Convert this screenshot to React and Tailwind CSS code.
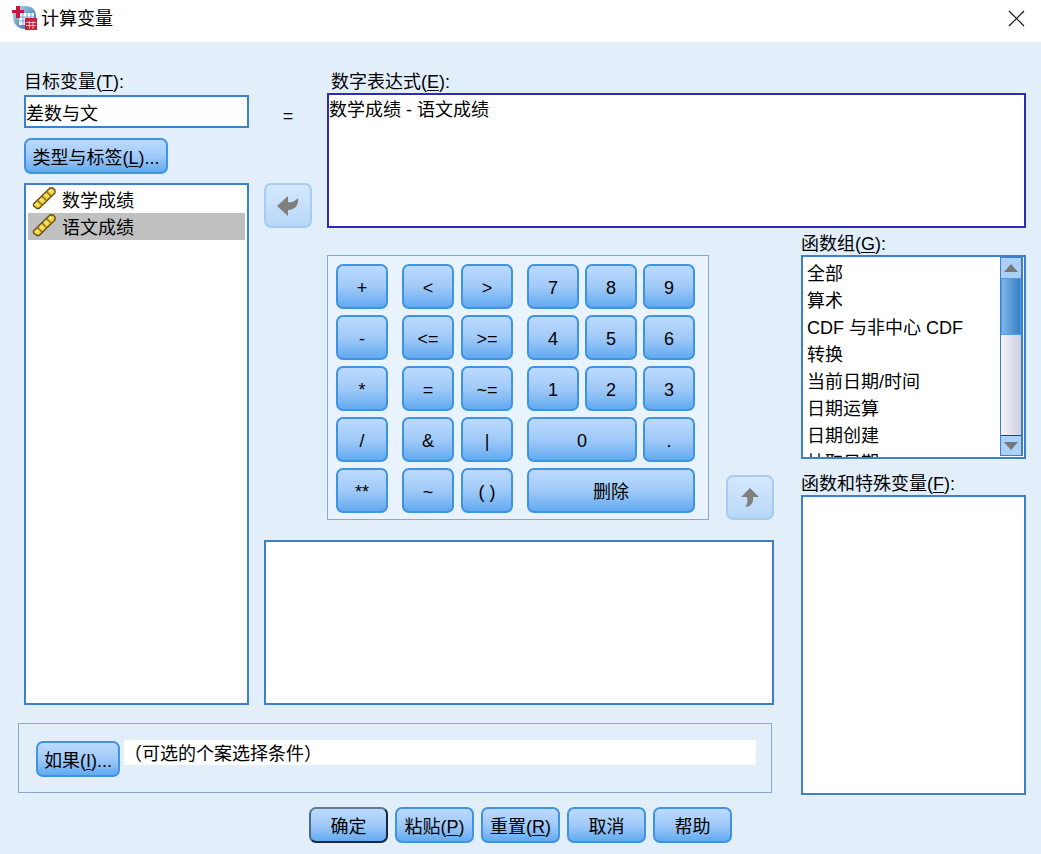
import { useState } from 'react';

const variables = ['数学成绩', '语文成绩'];

const functionGroups = [
  '全部',
  '算术',
  'CDF 与非中心 CDF',
  '转换',
  '当前日期/时间',
  '日期运算',
  '日期创建',
  '抽取日期',
];

const arithmeticKeys = ['+', '-', '*', '/', '**'];
const compareKeys = ['<', '>', '<=', '>=', '=', '~=', '&', '|', '~', '( )'];
const numberKeys = ['7', '8', '9', '4', '5', '6', '1', '2', '3'];

const buttonStyle =
  'rounded-[7px] border-2 bg-linear-to-b from-[#bcdaff] via-[#a0caf8] to-[#62aaf0] text-black';

function Key({ label, className = '', onPress }) {
  return (
    <button
      type="button"
      onClick={() => onPress(label)}
      className={`h-[45px] min-w-[52px] border-[#3f93e3] pt-0.5 text-lg leading-6 ${buttonStyle} ${className}`}
    >
      {label}
    </button>
  );
}

function DialogButton({ children, isDefault, className = '' }) {
  return (
    <button
      type="button"
      className={`h-9 pt-1 text-lg leading-6 whitespace-nowrap ${buttonStyle} ${
        isDefault ? 'border-t-[#66788f] border-r-[#16283f] border-b-[#16283f] border-l-[#4c6a8e]' : 'border-[#3f93e3]'
      } ${className}`}
    >
      {children}
    </button>
  );
}

// label text with its underlined shortcut letter
function Mnemonic({ text, letter, end = '' }) {
  return (
    <>
      {text}(<span className="underline underline-offset-2">{letter}</span>){end}
    </>
  );
}

function AppIcon() {
  return (
    <svg viewBox="0 0 26 26" className="size-[26px]" aria-hidden="true">
      <defs>
        <linearGradient id="globe" x1="0" y1="0" x2="1" y2="1">
          <stop offset="0" stopColor="#c3dbec" />
          <stop offset="0.5" stopColor="#6d9fcc" />
          <stop offset="1" stopColor="#2d6aa5" />
        </linearGradient>
      </defs>
      <path d="M8 1H14C20 1 24 5 24 11V24H13C5 24 1 18 1 12V8Z" fill="url(#globe)" />
      <rect x="7" y="8" width="15" height="12" fill="#f3f8fc" />
      <path d="M7 12h15M7 16h15M11 8v12M15 8v12M19 8v12" stroke="#7fa8cd" strokeWidth="1" />
      <path d="M4 1h4v4h4v3h-4v5h-4v-5h-4v-3h4z" fill="#c9143c" />
      <rect x="13" y="13" width="12" height="12" fill="#c9203f" />
      <path d="M14 17.500h10M14 20.500h10M17.500 16v8M21 16v8" stroke="#f3b5be" strokeWidth="1" />
    </svg>
  );
}

function RulerIcon() {
  return (
    <svg viewBox="0 0 24 24" className="size-6 shrink-0" aria-hidden="true">
      <path d="M1.500 18L18 2H21L23 4V7L7 22.500H5L1.500 20Z" fill="#f7d13a" stroke="#5c4c1c" strokeWidth="1.300" />
      <path d="M5.500 14.500L10 19M10 10L14.500 14.500M14.500 5.500L19 10" stroke="#7d6418" strokeWidth="1.200" />
      <path d="M4 17.500L6 19.500M8.500 13L10.500 15M13 8.500L15 10.500M17.500 4L19.500 6" stroke="#fdee9c" strokeWidth="1.500" />
    </svg>
  );
}

function MoveButton({ label, children }) {
  return (
    <button
      type="button"
      aria-label={label}
      disabled
      className="flex h-[45px] w-12 items-center justify-center rounded-[7px] border-2 border-[#a5cdf3] bg-linear-to-b from-[#d5e8fd] to-[#b7d7f8]"
    >
      {children}
    </button>
  );
}

function App() {
  const [target, setTarget] = useState('差数与文');
  const [expression, setExpression] = useState('数学成绩 - 语文成绩');
  const [selected, setSelected] = useState('语文成绩');

  const addToExpression = (value) => setExpression(expression + ' ' + value);

  return (
    <div className="flex min-h-screen flex-col bg-[#e2effb] font-['Liberation_Sans','Noto_Sans_CJK_SC',sans-serif] text-lg leading-6 text-black">
      <header className="flex h-[42px] items-center justify-between bg-white pr-4 pb-1.5 pl-3">
        <div className="flex items-center gap-[3px]">
          <AppIcon />
          <h1 className="pt-0.5">计算变量</h1>
        </div>
        <button type="button" aria-label="关闭">
          <svg viewBox="0 0 17 17" className="size-[17px]" fill="none" stroke="#111" strokeWidth="1.200">
            <path d="M1 1l15 15M16 1L1 16" />
          </svg>
        </button>
      </header>

      <main className="grid grid-cols-[231px_1fr_237px] grid-rows-[auto_1fr_auto] gap-x-[15px] pt-7 pr-[15px] pl-[18px]">
        <section className="row-span-2 flex flex-col pl-1.5">
          <label htmlFor="target" className="h-[25px]">
            <Mnemonic text="目标变量" letter="T" end=":" />
          </label>
          <input
            id="target"
            value={target}
            onChange={(e) => setTarget(e.target.value)}
            className="h-[33px] border-2 border-[#3c80cb] bg-white outline-none"
          />
          <DialogButton className="mt-[10px] w-36">
            <Mnemonic text="类型与标签" letter="L" end="..." />
          </DialogButton>
          <ul role="listbox" aria-label="变量" className="mt-[9px] grow border-2 border-[#3c80cb] bg-white px-0.5 py-px">
            {variables.map((name) => (
              <li
                key={name}
                role="option"
                aria-selected={name === selected}
                onClick={() => setSelected(name)}
                className={`flex h-[27px] items-start gap-[6px] pl-1 ${name === selected ? 'bg-[#c0c0c0]' : ''}`}
              >
                <RulerIcon />
                <span className="pt-[3px]">{name}</span>
              </li>
            ))}
          </ul>
        </section>

        <section className="col-span-2 flex gap-[15px]">
          <div className="flex w-12 flex-col items-center justify-between pt-[34px]">
            <span>=</span>
            <MoveButton label="移到表达式">
              <svg viewBox="0 0 22 20" className="h-5 w-[22px]" fill="#7f7f7f">
                <path d="M0 10L11 0V6C15 7 18 5 21 2C22 9 18 14 11 14V20Z" />
              </svg>
            </MoveButton>
          </div>
          <div className="flex grow flex-col">
            <label htmlFor="expression" className="h-[23px] pl-1">
              <Mnemonic text="数字表达式" letter="E" end=":" />
            </label>
            <textarea
              id="expression"
              value={expression}
              onChange={(e) => setExpression(e.target.value)}
              className="h-[135px] resize-none border-2 border-[#2c2cb4] bg-white pt-[3px] outline-none"
            />
          </div>
        </section>

        <section className="flex flex-col pt-[27px]">
          <div className="flex items-end justify-between pl-[63px]">
            <div className="flex gap-[14px] border border-[#86a9d4] bg-[#e8f3fd] pt-2 pr-[13px] pb-1.5 pl-2">
              <div className="grid gap-1.5">
                {arithmeticKeys.map((k) => (
                  <Key key={k} label={k} onPress={addToExpression} />
                ))}
              </div>
              <div className="grid grid-cols-2 gap-x-[7px] gap-y-1.5">
                {compareKeys.map((k) => (
                  <Key key={k} label={k} onPress={addToExpression} />
                ))}
              </div>
              <div className="grid grid-cols-3 gap-x-[6px] gap-y-1.5">
                {numberKeys.map((k) => (
                  <Key key={k} label={k} onPress={addToExpression} />
                ))}
                <Key label="0" className="col-span-2" onPress={addToExpression} />
                <Key label="." onPress={addToExpression} />
                <Key label="删除" className="col-span-3" onPress={() => setExpression('')} />
              </div>
            </div>
            <MoveButton label="插入函数">
              <svg viewBox="0 0 18 20" className="h-5 w-[18px]" fill="#7f7f7f">
                <path d="M9 0L18 9H12C13 14 10 19 4 19C6 17 7 14 6 9H0Z" />
              </svg>
            </MoveButton>
          </div>
          <textarea
            aria-label="函数说明"
            readOnly
            className="mt-5 min-h-[165px] grow resize-none border-2 border-[#3c80cb] bg-white outline-none"
          />
        </section>

        <section className="row-span-2 flex flex-col pt-1 pl-3">
          <h2 id="groups" className="h-[23px]">
            <Mnemonic text="函数组" letter="G" end=":" />
          </h2>
          <div className="flex h-[204px] border-2 border-[#3c80cb] bg-white">
            <ul role="listbox" aria-labelledby="groups" className="grow overflow-hidden pt-1 pl-1">
              {functionGroups.map((name) => (
                <li key={name} role="option" aria-selected="false" className="h-[27px] leading-[27px]">
                  {name}
                </li>
              ))}
            </ul>
            <div className="mr-px mb-px flex w-[23px] flex-col border border-r-2 border-[#3c80cb] bg-linear-to-r from-[#f6f3fa] to-[#cfcfe2]">
              <button type="button" aria-label="向上滚动" className="flex h-5 items-center justify-center bg-[#abd1fb]">
                <svg viewBox="0 0 14 8" className="h-2 w-[14px]" fill="#777">
                  <path d="M0 8L7 0L14 8Z" />
                </svg>
              </button>
              <div className="h-[57px] border border-[#4f9de6] bg-linear-to-r from-[#7eb6e8] to-[#3480c4]" />
              <div className="grow" />
              <button type="button" aria-label="向下滚动" className="flex h-5 items-center justify-center border-t border-[#24496f] bg-[#abd1fb]">
                <svg viewBox="0 0 14 8" className="h-2 w-[14px]" fill="#777">
                  <path d="M0 0L14 0L7 8Z" />
                </svg>
              </button>
            </div>
          </div>
          <h2 id="functions" className="mt-[13px] h-[23px]">
            <Mnemonic text="函数和特殊变量" letter="F" end=":" />
          </h2>
          <ul role="listbox" aria-labelledby="functions" className="min-h-[300px] grow border-2 border-[#3c80cb] bg-white" />
        </section>

        <section className="col-span-2 mt-[18px] mr-0.5 mb-0.5 flex items-start gap-1 border border-[#86a9d4] pt-4 pr-[15px] pb-[15px] pl-[17px]">
          <DialogButton className="mt-px w-[84px] shrink-0">
            <Mnemonic text="如果" letter="I" end="..." />
          </DialogButton>
          <p className="grow bg-white pt-1 leading-[21px]">（可选的个案选择条件）</p>
        </section>
      </main>

      <footer className="flex justify-center gap-[7px] pt-3 pb-[11px]">
        <DialogButton isDefault className="w-[79px]">
          确定
        </DialogButton>
        <DialogButton className="w-[79px]">
          <Mnemonic text="粘贴" letter="P" />
        </DialogButton>
        <DialogButton className="w-[79px]">
          <Mnemonic text="重置" letter="R" />
        </DialogButton>
        <DialogButton className="w-[79px]">取消</DialogButton>
        <DialogButton className="w-[79px]">帮助</DialogButton>
      </footer>
    </div>
  );
}

export default App;
